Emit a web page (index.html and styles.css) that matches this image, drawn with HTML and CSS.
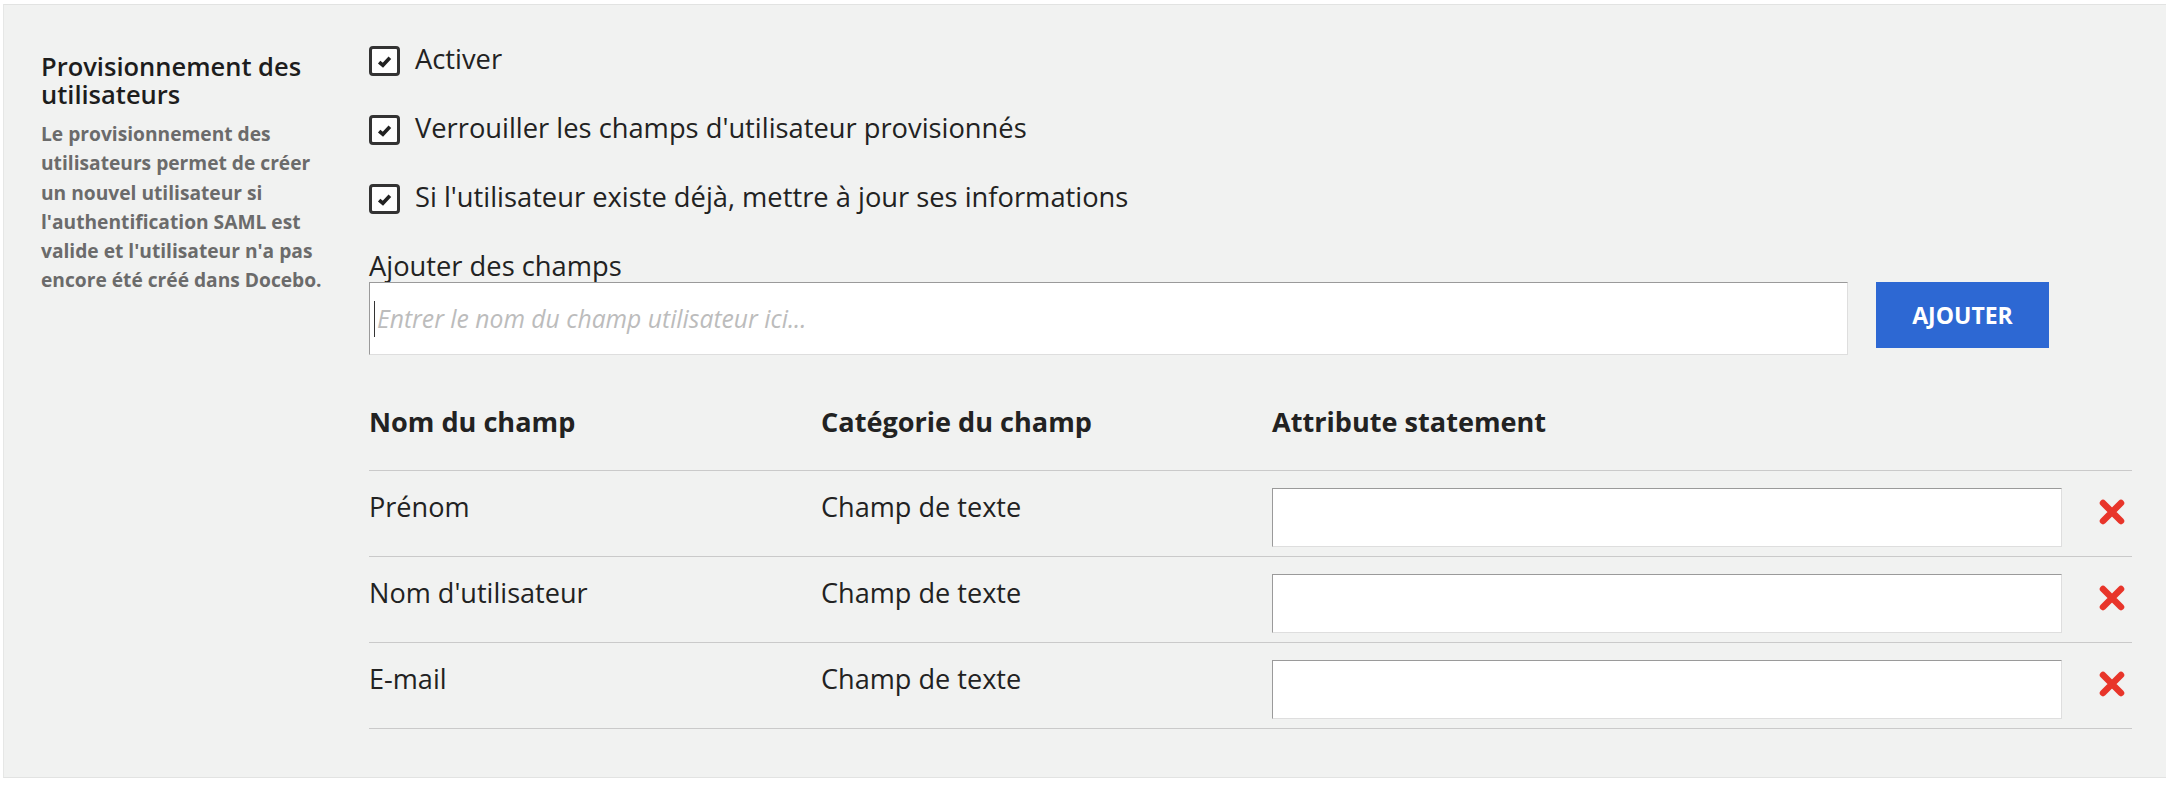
FILE: index.html
```html
<!DOCTYPE html>
<html lang="fr">
<head>
<meta charset="utf-8">
<title>Provisionnement des utilisateurs</title>
<link rel="stylesheet" href="styles.css">
</head>
<body>
<div class="panel">
  <div class="side">
    <h2 class="side-title">Provisionnement des utilisateurs</h2>
    <p class="side-desc">Le provisionnement des utilisateurs permet de créer un nouvel utilisateur si l'authentification SAML est valide et l'utilisateur n'a pas encore été créé dans Docebo.</p>
  </div>
  <div class="main">
    <label class="check-row">
      <span class="box"><svg class="tick" viewBox="0 0 14 12" width="15" height="13"><polyline points="2,6.5 5.5,9.5 12,2.5" fill="none" stroke="#222" stroke-width="3.4"/></svg></span>
      <span class="check-label">Activer</span>
    </label>
    <label class="check-row">
      <span class="box"><svg class="tick" viewBox="0 0 14 12" width="15" height="13"><polyline points="2,6.5 5.5,9.5 12,2.5" fill="none" stroke="#222" stroke-width="3.4"/></svg></span>
      <span class="check-label">Verrouiller les champs d'utilisateur provisionnés</span>
    </label>
    <label class="check-row">
      <span class="box"><svg class="tick" viewBox="0 0 14 12" width="15" height="13"><polyline points="2,6.5 5.5,9.5 12,2.5" fill="none" stroke="#222" stroke-width="3.4"/></svg></span>
      <span class="check-label">Si l'utilisateur existe déjà, mettre à jour ses informations</span>
    </label>

    <div class="add-label">Ajouter des champs</div>
    <div class="add-row">
      <div class="field">
        <span class="caret"></span>
        <input class="field-input" type="text" placeholder="Entrer le nom du champ utilisateur ici...">
      </div>
      <button class="btn">AJOUTER</button>
    </div>

    <div class="table">
      <div class="trow thead">
        <div class="cell">Nom du champ</div>
        <div class="cell">Catégorie du champ</div>
        <div class="cell">Attribute statement</div>
        <div class="cell"></div>
      </div>
      <div class="trow">
        <div class="cell">Prénom</div>
        <div class="cell">Champ de texte</div>
        <div class="cell"><input class="attr-input" type="text"></div>
        <div class="cell del"><svg viewBox="0 0 28 28" width="28" height="28"><path d="M5 5 L23 23 M23 5 L5 23" stroke="#e8352a" stroke-width="6.5" stroke-linecap="round"/></svg></div>
      </div>
      <div class="trow">
        <div class="cell">Nom d'utilisateur</div>
        <div class="cell">Champ de texte</div>
        <div class="cell"><input class="attr-input" type="text"></div>
        <div class="cell del"><svg viewBox="0 0 28 28" width="28" height="28"><path d="M5 5 L23 23 M23 5 L5 23" stroke="#e8352a" stroke-width="6.5" stroke-linecap="round"/></svg></div>
      </div>
      <div class="trow">
        <div class="cell">E-mail</div>
        <div class="cell">Champ de texte</div>
        <div class="cell"><input class="attr-input" type="text"></div>
        <div class="cell del"><svg viewBox="0 0 28 28" width="28" height="28"><path d="M5 5 L23 23 M23 5 L5 23" stroke="#e8352a" stroke-width="6.5" stroke-linecap="round"/></svg></div>
      </div>
    </div>
  </div>
</div>
</body>
</html>
```

FILE: styles.css
```css
* { box-sizing: border-box; }

html, body {
  margin: 0;
  padding: 0;
  background: #ffffff;
}

body {
  font-family: "Open Sans", "Noto Sans", "Liberation Sans", sans-serif;
  color: #222222;
}

.panel {
  margin: 4px 0 0 3px;
  background: #f1f2f1;
  border-top: 1px solid #e2e3e2;
  border-left: 1px solid #e6e7e6;
  border-bottom: 1px solid #e2e3e2;
  height: 774px;
  display: flex;
  align-items: flex-start;
  padding-left: 37px;
}

.side {
  width: 290px;
  margin-right: 38px;
  padding-top: 47px;
}

.side-title {
  margin: 0;
  font-size: 25.5px;
  line-height: 28px;
  font-weight: 600;
  color: #1d1d1d;
}

.side-desc {
  margin: 11px 0 0;
  font-size: 19.2px;
  line-height: 29.3px;
  font-weight: 700;
  color: #6b6b6b;
}

.main {
  width: 1763px;
  padding-top: 41px;
  display: flex;
  flex-direction: column;
}

.check-row {
  display: flex;
  align-items: center;
  gap: 15px;
  height: 30px;
  margin-bottom: 39px;
}

.check-row:nth-of-type(3) {
  margin-bottom: 0;
}

.box {
  width: 31px;
  height: 30px;
  border: 3px solid #333333;
  border-radius: 4px;
  background: #ffffff;
  display: flex;
  align-items: center;
  justify-content: center;
  flex: none;
}

.check-label {
  font-size: 27.3px;
  line-height: 30px;
  padding-bottom: 5px;
  color: #222222;
}

.add-label {
  margin-top: 36px;
  font-size: 27.3px;
  line-height: 32px;
  color: #222222;
}

.add-row {
  display: flex;
  align-items: flex-start;
  gap: 28px;
}

.field {
  position: relative;
  width: 1479px;
  height: 73px;
}

.field-input {
  width: 100%;
  height: 100%;
  border-style: solid;
  border-width: 1px;
  border-color: #9a9a9a #dedede #dedede #9a9a9a;
  background: #ffffff;
  padding: 0 0 0 7px;
  font-family: "Open Sans", "Noto Sans", sans-serif;
  font-size: 24.7px;
  color: #333333;
  outline: none;
}

.field-input::placeholder {
  font-style: italic;
  color: #bcbcbc;
}

.caret {
  position: absolute;
  left: 5px;
  top: 19px;
  width: 1px;
  height: 36px;
  background: #333333;
}

.btn {
  width: 173px;
  height: 66px;
  border: none;
  background: #2d68d3;
  color: #ffffff;
  font-family: "Open Sans", "Noto Sans", sans-serif;
  font-weight: 700;
  font-size: 23px;
  padding: 0;
}

.table {
  margin-top: 48px;
  display: flex;
  flex-direction: column;
}

.trow {
  display: grid;
  grid-template-columns: 452px 451px 790px 70px;
  border-bottom: 1px solid #cacaca;
  padding: 17px 0 9px;
  font-size: 27.1px;
  line-height: 38px;
  color: #222222;
}

.trow.thead {
  padding: 0 0 29px;
  font-weight: 700;
}

.attr-input {
  display: block;
  width: 790px;
  height: 59px;
  border-style: solid;
  border-width: 1px;
  border-color: #9a9a9a #dedede #dedede #9a9a9a;
  background: #ffffff;
  outline: none;
}

.del {
  display: flex;
  justify-content: flex-end;
  padding-top: 10px;
  padding-right: 6px;
}
```
